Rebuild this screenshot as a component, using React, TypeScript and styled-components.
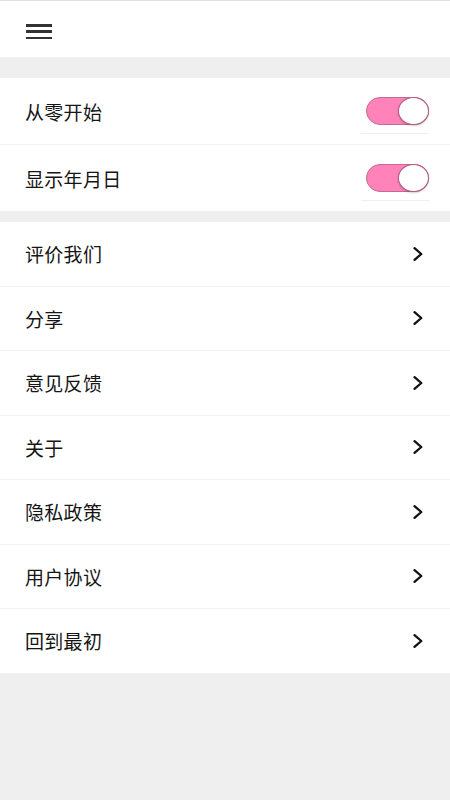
import React, { useState } from 'react';
import styled, { createGlobalStyle } from 'styled-components';

const GlobalStyle = createGlobalStyle`
  html, body {
    margin: 0;
    padding: 0;
    background: #efefef;
    font-family: "Noto Sans CJK SC", "Noto Sans", sans-serif;
  }
`;

const Page = styled.div`
  min-height: 800px;
  background: #efefef;
`;

const Header = styled.header`
  height: 56px;
  background: #fff;
  border-top: 1px solid #e2dfe1;
  display: flex;
  align-items: center;
  padding-left: 26px;
`;

const MenuButton = styled.button`
  border: none;
  background: none;
  padding: 0;
  margin-top: 5px;
  width: 26px;
  height: 15px;
  display: flex;
  flex-direction: column;
  justify-content: space-between;
  cursor: pointer;

  span {
    display: block;
    height: 2.5px;
    background: #333;
  }
`;

const Section = styled.section<{ $gap: number }>`
  margin-top: ${p => p.$gap}px;
  background: #fff;
`;

const Row = styled.div<{ $h: number; $pr: number }>`
  height: ${p => p.$h}px;
  display: flex;
  align-items: center;
  justify-content: space-between;
  padding: 0 ${p => p.$pr}px 0 25px;
  border-bottom: 1px solid #f2f2f2;

  &:last-child {
    border-bottom: none;
  }
`;

const Label = styled.span`
  font-size: 19px;
  color: #151515;
  letter-spacing: 0.3px;
`;

const SwitchWrap = styled.div`
  width: 63px;
  padding: 0 0 8px 5px;
  border-bottom: 1px solid #eeeeee;
  margin-top: 9px;
  display: flex;
  justify-content: flex-end;
`;

const Track = styled.button<{ $on: boolean }>`
  position: relative;
  width: 63px;
  height: 28px;
  border-radius: 14px;
  border: 1px solid ${p => (p.$on ? '#c46b93' : '#cccccc')};
  background: ${p => (p.$on ? '#ff82b8' : '#e5e5e5')};
  padding: 0;
  cursor: pointer;
`;

const Knob = styled.span<{ $on: boolean }>`
  position: absolute;
  top: -1px;
  left: ${p => (p.$on ? '31px' : '-1px')};
  width: 31px;
  height: 28px;
  border-radius: 50%;
  background: #fff;
  border: 1px solid #b45a83;
  box-sizing: border-box;
  box-shadow: 0 1px 2px rgba(0, 0, 0, 0.2);
`;

const Chevron = () => (
  <svg width="10" height="14" viewBox="0 0 10 14">
    <polyline points="1.5,1.2 8.3,7 1.5,12.8" fill="none" stroke="#111" strokeWidth="2.3" strokeLinecap="round" strokeLinejoin="round" />
  </svg>
);

const toggles = ['从零开始', '显示年月日'];
const links = ['评价我们', '分享', '意见反馈', '关于', '隐私政策', '用户协议', '回到最初'];

export default function App() {
  const [on, setOn] = useState<boolean[]>([true, true]);

  return (
    <Page>
      <GlobalStyle />
      <Header>
        <MenuButton aria-label="menu">
          <span />
          <span />
          <span />
        </MenuButton>
      </Header>

      <Section $gap={21}>
        {toggles.map((t, i) => (
          <Row key={t} $h={66} $pr={21}>
            <Label>{t}</Label>
            <SwitchWrap>
              <Track $on={on[i]} onClick={() => setOn(on.map((v, j) => (j === i ? !v : v)))}>
                <Knob $on={on[i]} />
              </Track>
            </SwitchWrap>
          </Row>
        ))}
      </Section>

      <Section $gap={11}>
        {links.map(l => (
          <Row key={l} $h={63.5} $pr={27}>
            <Label>{l}</Label>
            <Chevron />
          </Row>
        ))}
      </Section>
    </Page>
  );
}
